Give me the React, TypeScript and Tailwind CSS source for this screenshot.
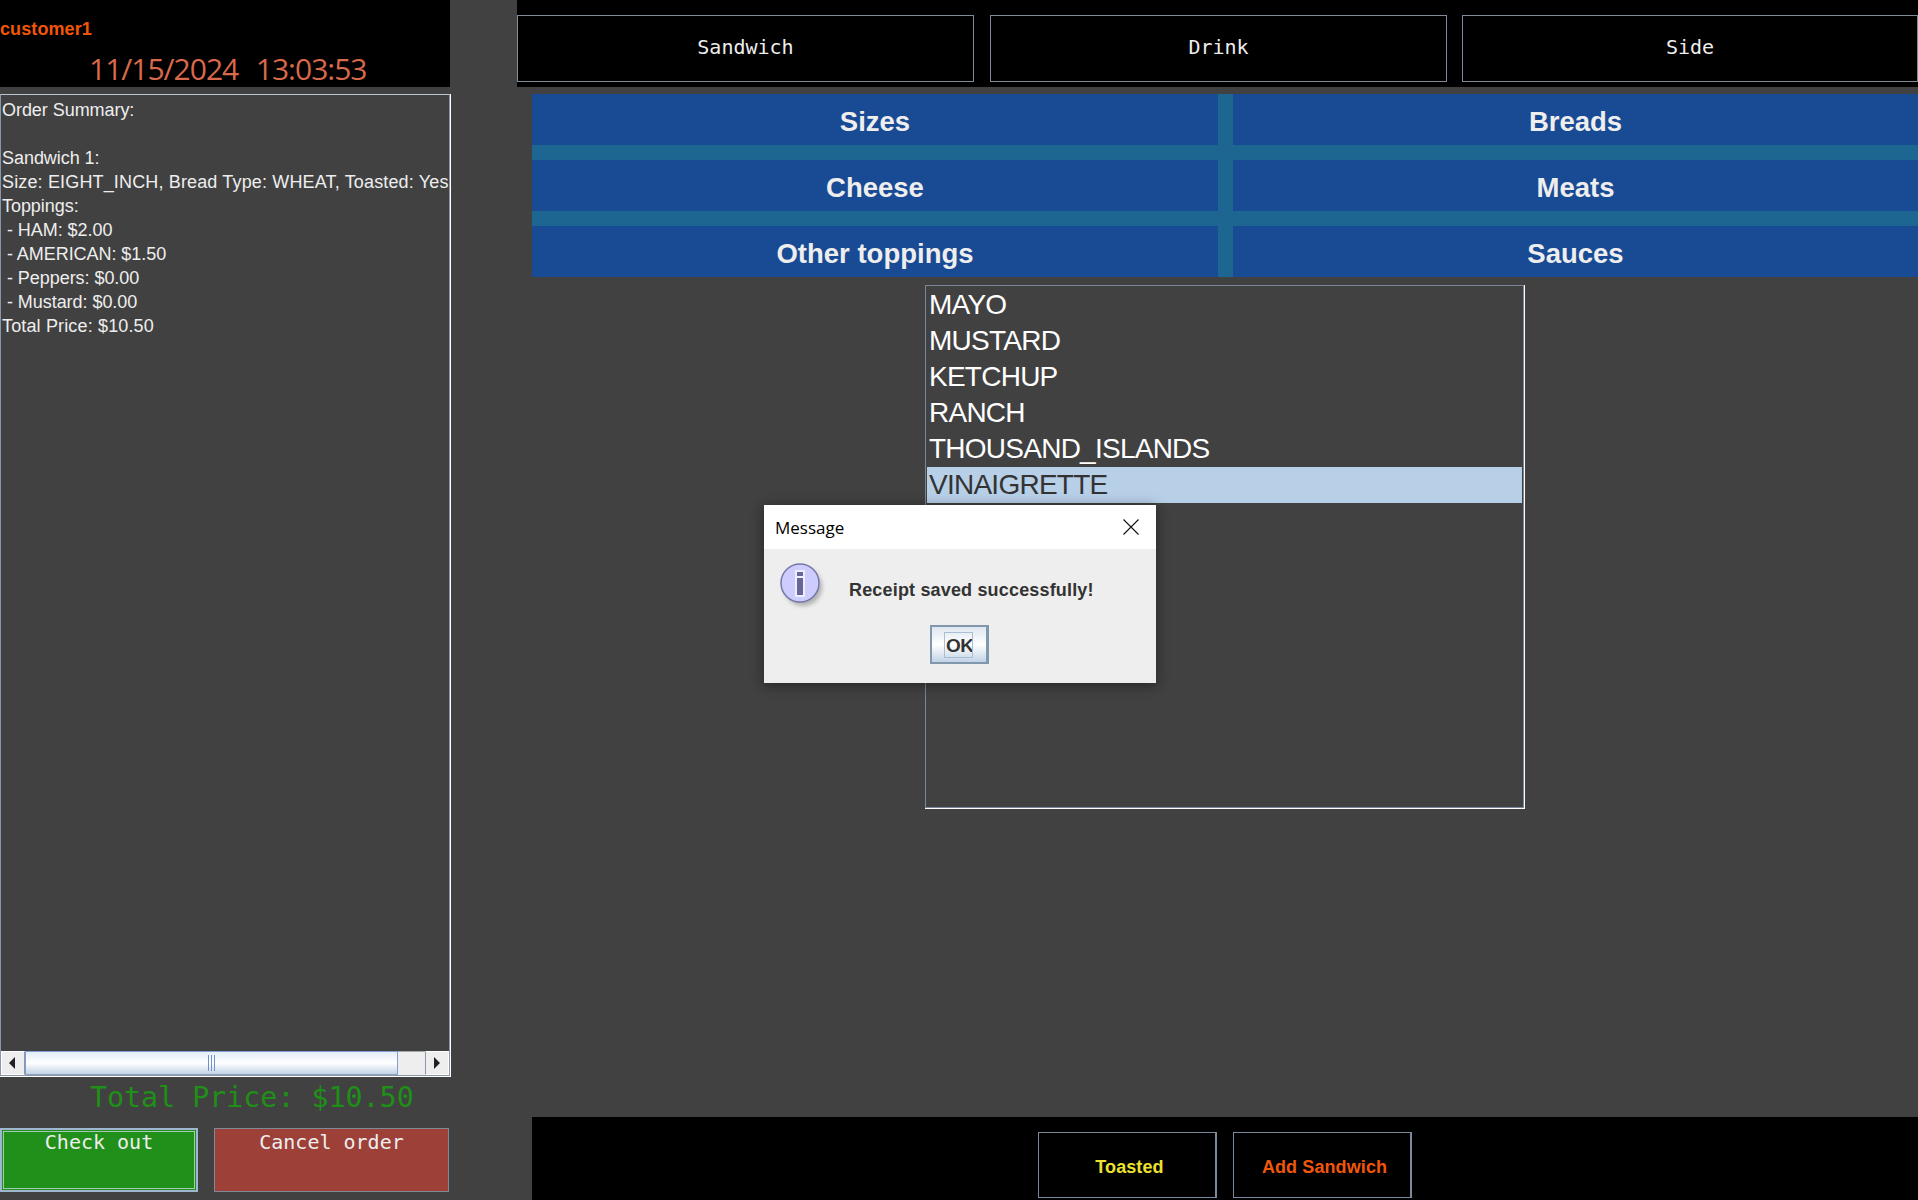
import React from "react";

const sans = "font-['Liberation_Sans',Arial,sans-serif]";
const mono = "font-['DejaVu_Sans_Mono',monospace]";

const summary = [
  { text: "Order Summary:", wide: false },
  { text: "\u00a0", wide: false },
  { text: "Sandwich 1:", wide: false },
  { text: "Size: EIGHT_INCH, Bread Type: WHEAT, Toasted: Yes", wide: true },
  { text: "Toppings:", wide: false },
  { text: " - HAM: $2.00", wide: false },
  { text: " - AMERICAN: $1.50", wide: false },
  { text: " - Peppers: $0.00", wide: false },
  { text: " - Mustard: $0.00", wide: false },
  { text: "Total Price: $10.50", wide: true },
];
const sauces = ["MAYO", "MUSTARD", "KETCHUP", "RANCH", "THOUSAND_ISLANDS", "VINAIGRETTE"];

function Scrollbar() {
  return (
    <div className="flex h-[24px] shrink-0 bg-[#eeeeee]">
      <div className="flex w-[24px] items-center justify-center border border-white border-r-[#8a97a8] pr-[3px]">
        <div className="h-0 w-0 border-y-[6px] border-r-[6px] border-y-transparent border-r-[#222222]" />
      </div>
      <div className="relative flex w-[373px] items-center justify-center border border-b-[#8fa3ba] border-[#7f9fd0] bg-gradient-to-b from-[#e4edf7] via-white to-[#c3d4e6]">
        <div className="flex h-[16px] gap-[2px]">
          <div className="w-px bg-[#6f8fcf]" />
          <div className="w-px bg-[#6f8fcf]" />
          <div className="w-px bg-[#6f8fcf]" />
        </div>
      </div>
      <div className="flex-1 border-t border-[#a0a8a8]" />
      <div className="flex w-[24px] items-center justify-center border border-white border-l-[#8a97a8] pr-[1px]">
        <div className="h-0 w-0 border-y-[6px] border-l-[6px] border-y-transparent border-l-[#222222]" />
      </div>
    </div>
  );
}

function TopButton({ label, w }: { label: string; w: string }) {
  return (
    <button className={`${w} ${mono} h-[67px] shrink-0 border border-[#808a98] bg-black pb-[3px] text-[20px] text-[#eeeeee]`}>
      {label}
    </button>
  );
}

function Category({ label }: { label: string }) {
  return (
    <div className={`${sans} flex items-center justify-center bg-[#194a94] pt-[5px] text-[27.5px] font-bold text-[#eeeeee]`}>
      {label}
    </div>
  );
}

function InfoIcon() {
  return (
    <svg width="48" height="48" viewBox="0 0 48 48" className="shrink-0">
      <defs>
        <filter id="sh" x="-30%" y="-30%" width="160%" height="160%">
          <feGaussianBlur stdDeviation="2" />
        </filter>
      </defs>
      <circle cx="24" cy="24" r="19" fill="#888888" opacity="0.6" filter="url(#sh)" />
      <circle cx="21" cy="20" r="19" fill="#ccccff" stroke="#7777aa" strokeWidth="1.5" />
      <rect x="16" y="7" width="10" height="27" fill="#eeeeff" />
      <rect x="18" y="9" width="6" height="4" fill="#666699" />
      <rect x="18" y="15" width="6" height="17" fill="#666699" />
    </svg>
  );
}

export default function App() {
  return (
    <div className={`${sans} relative flex h-[1200px] w-[1918px] overflow-hidden bg-[#414141]`}>
      <aside className="flex h-full w-[451px] shrink-0 flex-col">
        <header className="flex h-[87px] w-[450px] shrink-0 flex-col bg-black pt-[18px]">
          <div className="text-[18px] font-bold leading-[22px] tracking-[0.1px] text-[#f0560a]">customer1</div>
          <div className="mt-[10px] whitespace-pre pl-[89px] font-['Open_Sans',sans-serif] text-[30px] leading-[38px] tracking-[-1px] text-[#d8694a] [word-spacing:2px]">
            {"11/15/2024  13:03:53"}
          </div>
        </header>
        <div className="mt-[7px] h-[983px] shrink-0 border-b border-r border-white">
          <div className="flex h-full flex-col border border-[#8a97a8] border-t-[#b9c6d6]">
            <div className="flex-1 overflow-hidden whitespace-pre pl-[1px] pt-[3px] text-[18px] leading-[24px] text-[#eeeeee]">
              {summary.map((l, i) => (
                <div key={i} className={l.wide ? "tracking-[0.15px]" : "tracking-[-0.05px]"}>
                  {l.text}
                </div>
              ))}
            </div>
            <Scrollbar />
          </div>
        </div>
        <div className={`${mono} flex h-[40px] shrink-0 items-center pl-[90px] pt-[2px] text-[28.3px] text-[#1f8f18]`}>
          Total Price: $10.50
        </div>
        <div className="mt-[11px] flex h-[64px] gap-[16px]">
          <button className={`${mono} w-[198px] border-2 border-[#9db7d0] bg-[#21901a] text-[20px] leading-[24px] text-[#eeeeee] outline outline-1 -outline-offset-4 outline-[#a5c8b8]`}>
            <div className="h-full">Check out</div>
          </button>
          <button className={`${mono} w-[235px] border border-[#7f8a98] bg-[#9d4038] pt-[1px] text-[20px] leading-[24px] text-[#eeeeee]`}>
            <div className="h-full">Cancel order</div>
          </button>
        </div>
      </aside>

      <main className="ml-[66px] flex h-full min-w-0 flex-1 flex-col">
        <nav className="flex h-[87px] shrink-0 bg-black pt-[15px]">
          <TopButton label="Sandwich" w="w-[457px]" />
          <div className="ml-[16px]"><TopButton label="Drink" w="w-[457px]" /></div>
          <div className="ml-[15px]"><TopButton label="Side" w="w-[456px]" /></div>
        </nav>

        <section className="ml-[15px] mt-[7px] grid h-[183px] shrink-0 grid-cols-[686px_685px] grid-rows-[51px_51px_51px] gap-x-[15px] gap-y-[15px] bg-[#1d6692]">
          <Category label="Sizes" />
          <Category label="Breads" />
          <Category label="Cheese" />
          <Category label="Meats" />
          <Category label="Other toppings" />
          <Category label="Sauces" />
        </section>

        <div className="ml-[408px] mt-[8px] h-[524px] w-[600px] shrink-0 border-b border-r border-white">
          <div className="h-full border border-[#7a8799] pl-[1px] pt-[1px]">
            {sauces.map((s) => (
              <div
                key={s}
                className={`h-[36px] w-[595px] pl-[2px] text-[28px] leading-[36px] tracking-[-0.75px] ${
                  s === "VINAIGRETTE" ? "bg-[#b8cfe8] text-[#333333]" : "text-white"
                }`}
              >
                {s}
              </div>
            ))}
          </div>
        </div>

        <div className="flex-1" />

        <footer className="ml-[15px] flex h-[83px] shrink-0 items-start justify-center gap-[16px] bg-black pt-[15px]">
          <button className="h-[66px] w-[179px] border border-r-2 border-[#7a8a9c] pl-[5px] pt-[5px] text-[18px] font-bold tracking-[0.1px] text-[#ece22e]">
            Toasted
          </button>
          <button className="h-[66px] w-[179px] border border-r-2 border-[#7a8a9c] pl-[5px] pt-[5px] text-[18px] font-bold tracking-[0.1px] text-[#f0560a]">
            Add Sandwich
          </button>
        </footer>
      </main>

      <div className="absolute left-[764px] top-[505px] flex h-[178px] w-[392px] flex-col bg-[#eeeeee] shadow-[0_2px_12px_rgba(0,0,0,0.45)]">
        <div className="flex h-[44px] shrink-0 items-center justify-between bg-white pl-[11px] pr-[16px]">
          <span className="mt-[1px] font-['Open_Sans',sans-serif] text-[17px] text-black">Message</span>
          <svg width="18" height="18" viewBox="0 0 18 18" fill="none" stroke="#111111" strokeWidth="1.1" className="mb-[1px]">
            <path d="M1.5 1.5 L16.5 16.5 M16.5 1.5 L1.5 16.5" />
          </svg>
        </div>
        <div className="flex h-[76px] shrink-0 pl-[15px] pt-[14px]">
          <InfoIcon />
          <div className="mt-[15px] pl-[22px] text-[18px] font-bold leading-[24px] tracking-[0.17px] text-[#333333]">
            Receipt saved successfully!
          </div>
        </div>
        <div className="flex justify-center">
          <button className="ml-[-2px] flex h-[39px] w-[59px] items-center justify-center border-2 border-r-[3px] border-[#8197ad] bg-gradient-to-b from-[#dde6f0] via-white to-[#c2d3e6] text-[19px] font-bold text-[#333333]">
            <span className="flex h-[26px] w-[29px] items-center justify-start overflow-hidden border border-[#a9bdd3] pl-[1px] pt-[2px] leading-none tracking-[-0.5px]">OK</span>
          </button>
        </div>
      </div>
    </div>
  );
}
